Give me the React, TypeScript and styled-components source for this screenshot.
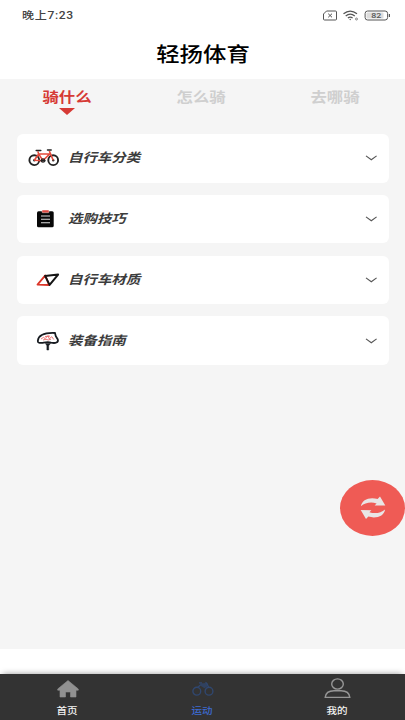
import React from "react";
import styled, { createGlobalStyle } from "styled-components";

const Global = createGlobalStyle`
  * { box-sizing: border-box; }
  body { margin: 0; background: #fff; overflow: hidden; font-family: Roboto, "Noto Sans CJK SC", sans-serif; }
  svg { display: block; flex: none; }
`;

const Screen = styled.div`
  position: relative;
  width: 405px;
  height: 720px;
  display: flex;
  flex-direction: column;
  background: #fff;
  overflow: hidden;
`;

const Wide = styled.span<{ $origin?: string; $x?: number }>`
  display: inline-block;
  white-space: nowrap;
  transform: scaleX(${(p) => p.$x ?? 1.17});
  transform-origin: ${(p) => p.$origin ?? "center"};
`;

const StatusBar = styled.header`
  height: 30px;
  flex: none;
  display: flex;
  align-items: center;
  justify-content: space-between;
  padding: 1px 14px 0 22px;
`;

const Clock = styled.time`
  font-size: 10.5px;
  line-height: 16px;
  font-weight: 500;
  letter-spacing: 0.55px;
  color: #444;
`;

const StatusIcons = styled.div`
  display: flex;
  align-items: center;
  gap: 5px;
`;

const TitleBar = styled.h1`
  margin: 0;
  height: 49px;
  flex: none;
  display: flex;
  align-items: center;
  justify-content: center;
  padding-top: 1px;
  font-size: 20px;
  line-height: 28px;
  font-weight: 500;
  color: #000;
`;

const Content = styled.main`
  height: 570px;
  flex: none;
  background: #f5f5f5;
`;

const Tabs = styled.nav`
  height: 55px;
  display: grid;
  grid-template-columns: repeat(3, 134px);
`;

const Tab = styled.div<{ $active?: boolean }>`
  display: flex;
  flex-direction: column;
  align-items: center;
  padding-top: 8px;
  font-size: 14px;
  line-height: 20px;
  font-weight: 700;
  color: ${(p) => (p.$active ? "#d63a35" : "#cfcfcf")};
`;

const Marker = styled.i`
  margin-top: 1px;
  border: 8.5px solid transparent;
  border-top: 7px solid #d63a35;
  border-bottom: 0;
`;

const List = styled.div`
  display: flex;
  flex-direction: column;
  gap: 12.3px;
  padding: 0 16px 0 17px;
`;

const Card = styled.section`
  height: 48.5px;
  display: flex;
  align-items: center;
  padding: 0 11px;
  border-radius: 6px;
  background: #fff;
`;

const IconSlot = styled.div`
  width: 40px;
  height: 24px;
  display: flex;
  align-items: center;
`;

const CardTitle = styled.div`
  flex: 1;
  font-size: 12.5px;
  line-height: 18px;
  font-weight: 700;
  font-style: italic;
  color: #3c3c3c;
`;

const Fab = styled.button`
  position: absolute;
  left: 340px;
  top: 480px;
  width: 65px;
  height: 56px;
  border: 0;
  border-radius: 50%;
  padding: 0;
  display: flex;
  align-items: center;
  justify-content: center;
  background: #ef5b55;
`;

const Spacer = styled.div`
  height: 25px;
  flex: none;
`;

const BottomNav = styled.nav`
  height: 46px;
  flex: none;
  display: grid;
  grid-template-columns: repeat(3, 1fr);
  background: #333;
  box-shadow: 0 -3px 6px -3px rgba(0, 0, 0, 0.4);
`;

const NavItem = styled.div<{ $active?: boolean }>`
  display: flex;
  flex-direction: column;
  align-items: center;
  font-size: 9px;
  line-height: 14px;
  font-weight: 500;
  color: ${(p) => (p.$active ? "#3c6ad0" : "#f2f2f2")};
`;

const NavIcon = styled.div`
  height: 29px;
  display: flex;
  align-items: center;
  margin-bottom: 0.5px;
`;

const Bicycle = () => (
  <svg width="32" height="18" viewBox="0 0 32 18" fill="none">
    <g stroke="#222" strokeWidth="1.9">
      <circle cx="6.3" cy="11.2" r="4.9" />
      <circle cx="25.2" cy="11.2" r="4.9" />
    </g>
    <circle cx="6.3" cy="11.2" r="1.2" fill="#333" />
    <circle cx="25.2" cy="11.2" r="1.2" fill="#333" />
    <path d="M6.3 11.2 10.6 5h11l-6.6 6.6L10.6 5 9.9 2.4M15 11.6l-8.7-.4M25.2 11.2 21.3 2" stroke="#e5493a" strokeWidth="1.6" />
    <path d="M8.2 1.4h4.6M19.5 1h3.7M13 11.8h4" stroke="#222" strokeWidth="1.5" strokeLinecap="round" />
    <circle cx="15" cy="11.6" r="1.7" stroke="#222" strokeWidth="1.1" />
  </svg>
);

const Clipboard = () => (
  <svg width="26" height="18" viewBox="0 0 26 18">
    <rect x="9" y="1.2" width="16.7" height="16" rx="1.5" fill="#080808" />
    <rect x="14" y="0.1" width="7" height="2.6" rx="0.7" fill="#df4840" stroke="#fff" strokeWidth="0.4" />
    <path d="M13 6h9M13 9.3h9M13 12.7h9" stroke="#ddd" strokeWidth="1.1" />
  </svg>
);

const Frame = () => (
  <svg width="32" height="18" viewBox="0 0 32 18" fill="none" strokeLinejoin="round" strokeLinecap="round">
    <path d="M17.3 4.4 21 14 9.5 13.6Z" stroke="#db3629" strokeWidth="1.8" />
    <path d="M17.1 4.9 30.1 3.6 21.6 13.9Z" stroke="#151515" strokeWidth="2" />
  </svg>
);

const Saddle = () => (
  <svg width="32" height="20" viewBox="0 0 32 20" fill="none">
    <path d="M9.8 9.8C10.5 4.8 16 1.5 27 2l.8 3.2 2 3.2c.9 3-2.3 4.3-6.8 3.2-3.2-1-5.2-.4-8.2.2-3.4.4-5.2.1-5-2Z" stroke="#171b20" strokeWidth="1.8" />
    <path d="m13 8 2.4-1.6 1.8 1.2L20 4.6l1.2 3.2 2.6-2.1 2 2.8M15 9l3-.8 2.2.8 2.8-.8M17 5.5l5-.4" stroke="#e96968" strokeWidth="0.9" />
    <path d="M17.5 12.5h5l-1.8 2.2v4.3h-1.8v-4.3Z" fill="#171b20" stroke="#171b20" strokeWidth="0.5" />
  </svg>
);

const Chevron = () => (
  <svg width="13" height="8" viewBox="0 0 13 8" fill="none">
    <path d="m1 1.9 5.3 3.9 5.3-3.9" stroke="#555" strokeWidth="1.15" />
  </svg>
);

const items = [
  { title: "自行车分类", icon: <Bicycle /> },
  { title: "选购技巧", icon: <Clipboard /> },
  { title: "自行车材质", icon: <Frame /> },
  { title: "装备指南", icon: <Saddle /> },
];

export default function App() {
  return (
    <Screen>
      <Global />
      <StatusBar>
        <Clock><Wide $origin="left" $x={1.15}>晚上7:23</Wide></Clock>
        <StatusIcons>
          <svg width="15" height="11" viewBox="0 0 15 11" fill="none" stroke="#555">
            <path d="M3.5 1h9q1 0 1 1v7q0 1-1 1h-11q-1 0-1-1V4Z" />
            <path d="m5.2 3.7 3.8 3.6m0-3.6L5.2 7.3" />
          </svg>
          <svg width="16" height="11" viewBox="0 0 16 11" fill="none" stroke="#555" strokeWidth="1.3">
            <path d="M.5 3.8Q7.2-1.6 14 3.8M2.7 6Q7.2 2.3 11.8 6M4.9 8Q7.2 6.1 9.6 8" />
            <circle cx="7.2" cy="9.5" r="0.7" fill="#555" stroke="none" />
            <circle cx="13.5" cy="9" r="1" strokeWidth="0.7" />
          </svg>
          <svg width="27" height="11" viewBox="0 0 27 11">
            <rect x="1.1" y="1" width="22.5" height="9" rx="2.5" fill="#fff" stroke="#555" />
            <rect x="2.5" y="2.4" width="17" height="6.2" rx="1.2" fill="#ddd" />
            <path d="M25.4 4v3" stroke="#555" strokeWidth="1.2" />
            <text x="12.2" y="8.2" textAnchor="middle" textLength="10" lengthAdjust="spacingAndGlyphs" fontFamily="Roboto, sans-serif" fontWeight="500" fontSize="7.5" fill="#555">82</text>
          </svg>
        </StatusIcons>
      </StatusBar>
      <TitleBar><Wide>轻扬体育</Wide></TitleBar>
      <Content>
        <Tabs>
          <Tab $active><Wide>骑什么</Wide><Marker /></Tab>
          <Tab><Wide>怎么骑</Wide></Tab>
          <Tab><Wide>去哪骑</Wide></Tab>
        </Tabs>
        <List>
          {items.map((item) => (
            <Card key={item.title}>
              <IconSlot>{item.icon}</IconSlot>
              <CardTitle><Wide $origin="left" $x={1.155}>{item.title}</Wide></CardTitle>
              <Chevron />
            </Card>
          ))}
        </List>
      </Content>
      <Spacer />
      <BottomNav>
        <NavItem>
          <NavIcon>
            <svg width="22" height="18" viewBox="0 0 22 18">
              <path d="M11 .5 21.3 9v1.2H19V17h-5.5v-5h-5v5H3v-6.8H.7V9Z" fill="#919191" stroke="#919191" strokeWidth="0.6" strokeLinejoin="round" />
            </svg>
          </NavIcon>
          <Wide>首页</Wide>
        </NavItem>
        <NavItem $active>
          <NavIcon>
            <svg width="22" height="16" viewBox="0 0 22 16" fill="none" stroke="#30476f">
              <circle cx="4.8" cy="10.2" r="3.9" strokeWidth="1.4" />
              <circle cx="17" cy="10.2" r="3.9" strokeWidth="1.4" />
              <path d="M5.5 6.5 8.5 4M17 7 15 2.5 13.5 1.2M7 1.8h3" strokeWidth="1.2" />
              <path d="M7.5 2.5 15 2l1 3-3.5 2.2L9 5Z" fill="#30476f" fillOpacity="0.75" strokeWidth="0" />
            </svg>
          </NavIcon>
          <Wide>运动</Wide>
        </NavItem>
        <NavItem>
          <NavIcon>
            <svg width="27" height="21" viewBox="0 0 27 21" fill="none" stroke="#969696" strokeWidth="1.4">
              <ellipse cx="13.5" cy="6" rx="5.8" ry="5.1" />
              <path d="M1.2 19.4C1.6 15.2 5 12.7 10 12.7h7c5 0 8.4 2.5 8.8 6.7Z" />
            </svg>
          </NavIcon>
          <Wide>我的</Wide>
        </NavItem>
      </BottomNav>
      <Fab aria-label="刷新">
        <svg width="26" height="24" viewBox="0 0 26 24" fill="#e9e5e5">
          <path d="M.9 10.2C1.8 3.7 9.5.6 17.6 3L20 .6 25.3 9.6 14.6 9.4l2-2C11 5.6 5 6.6.9 10.2Z" />
          <path d="M25.1 13.4c-.9 6.5-8.6 9.6-16.7 7.2L6 23 .7 14l10.7.2-2 2c5.6 1.8 11.6.8 15.7-2.8Z" />
        </svg>
      </Fab>
    </Screen>
  );
}
